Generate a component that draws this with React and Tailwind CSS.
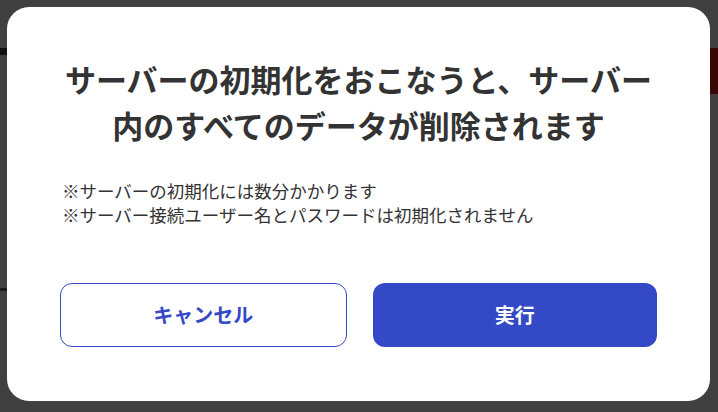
import React from 'react';

const font = { fontFamily: '"Noto Sans CJK JP", "Noto Sans", sans-serif' };

const ResetDialog = () => {
  return (
    <div className="relative w-[718px] h-[412px] bg-[#404040] p-[7px] pr-[8px] pb-[11px] flex overflow-hidden" style={font}>
      {/* faint page behind overlay */}
      <div className="absolute left-0 top-[48px] w-[8px] h-[7px] bg-[#111]" />
      <div className="absolute right-0 top-[48px] w-[8px] h-[46px] bg-[#3a0505]" />
      <div className="absolute left-0 top-[288px] w-[8px] h-[3px] bg-[#1a1a1a]" />

      <div className="relative flex-1 bg-white rounded-[22px] flex flex-col px-[53px] pt-[49px]">
        <h1 className="text-[31px] leading-[46px] font-bold text-[#333333] text-center">
          サーバーの初期化をおこなうと、サーバー
          <br />
          内のすべてのデータが削除されます
        </h1>

        <div className="mt-[31px] ml-[2px] text-[17.5px] leading-[24px] text-[#333333]">
          <p>※サーバーの初期化には数分かかります</p>
          <p>※サーバー接続ユーザー名とパスワードは初期化されません</p>
        </div>

        <div className="mt-[56px] flex gap-[26px]">
          <button className="flex-1 h-[64px] rounded-[12px] border border-[#3349c6] bg-white text-[#3349c6] text-[20px] font-bold">
            キャンセル
          </button>
          <button className="flex-1 h-[64px] rounded-[12px] bg-[#3349c6] text-white text-[20px] font-bold">
            実行
          </button>
        </div>
      </div>
    </div>
  );
};

export default function App() {
  return <ResetDialog />;
}
